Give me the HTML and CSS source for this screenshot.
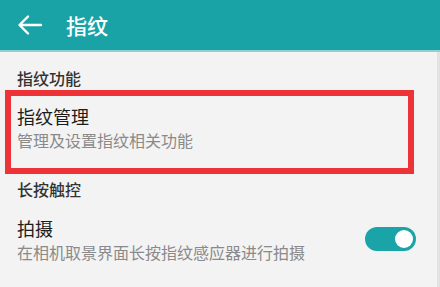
FILE: index.html
```html
<!DOCTYPE html>
<html lang="zh-CN">
<head>
<meta charset="utf-8">
<link rel="stylesheet" href="styles.css">
</head>
<body>
<div class="screen">
  <header class="appbar">
    <svg class="back" width="26" height="22" viewBox="0 0 26 22">
      <path d="M24 11H3M11 2.5L2.5 11L11 19.5" fill="none" stroke="#ffffff" stroke-width="2.4" stroke-linecap="round" stroke-linejoin="round"/>
    </svg>
    <h1 class="title">指纹</h1>
  </header>
  <main class="content">
    <div class="section">指纹功能</div>
    <div class="item highlighted">
      <div class="item-title">指纹管理</div>
      <div class="item-sub">管理及设置指纹相关功能</div>
    </div>
    <div class="section section-2">长按触控</div>
    <div class="item row">
      <div class="texts">
        <div class="item-title">拍摄</div>
        <div class="item-sub">在相机取景界面长按指纹感应器进行拍摄</div>
      </div>
      <div class="toggle"><span class="knob"></span></div>
    </div>
  </main>
</div>
</body>
</html>
```

FILE: styles.css
```css
html, body {
  margin: 0;
  padding: 0;
}
body {
  width: 440px;
  height: 287px;
  overflow: hidden;
  background: #f2f2f2;
  font-family: "Noto Sans CJK SC", "Noto Sans", sans-serif;
}
.screen {
  display: flex;
  flex-direction: column;
  height: 287px;
}
.appbar {
  height: 50px;
  background: #19a3a7;
  display: flex;
  align-items: center;
  padding-left: 17px;
  border-bottom: 2px solid #8fd0d2;
  box-sizing: content-box;
}
.back {
  display: block;
}
.title {
  margin: 0 0 0 23px;
  color: #ffffff;
  font-size: 21px;
  font-weight: 500;
  line-height: 24px;
}
.content {
  flex: 1;
  border-right: 3px solid #e2e2e2;
  background: #f3f3f3;
}
.section {
  margin: 15px 0 0 17px;
  font-size: 16px;
  line-height: 22px;
  color: #333333;
  font-weight: 500;
}
.section-2 {
  margin-top: 4px;
}
.item {
  padding: 0 0 0 17px;
}
.highlighted {
  margin: 1px 0 0 5px;
  width: 391px;
  border: 6px solid #ee3338;
  padding: 7px 0 17px 6px;
}
.item-title {
  font-size: 18px;
  line-height: 26px;
  color: #1c1c1c;
}
.item-sub {
  font-size: 16px;
  line-height: 22px;
  color: #8a8a8a;
}
.row {
  display: flex;
  align-items: center;
  justify-content: space-between;
  padding-top: 15px;
  padding-right: 21px;
}
.toggle {
  width: 51px;
  height: 24px;
  border-radius: 12px;
  background: #1ba4a8;
  display: flex;
  align-items: center;
  justify-content: flex-end;
  padding-right: 3px;
  box-sizing: border-box;
}
.knob {
  width: 18px;
  height: 18px;
  border-radius: 50%;
  background: #ffffff;
}
```
